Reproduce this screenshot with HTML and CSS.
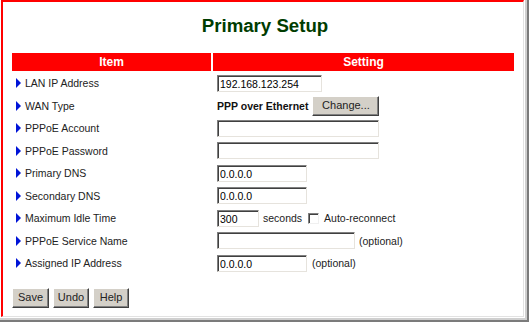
FILE: index.html
```html
<!DOCTYPE html>
<html>
	<head>
		<meta charset="UTF-8">
		<title>Primary Setup</title>
		<link rel="stylesheet" href="styles.css">
	</head>
	<body>
		<div class="screen">
			<div class="frame">
				<h1 class="title">Primary Setup</h1>
				<table class="setup">
					<tr>
						<th class="item">Item</th>
						<th>Setting</th>
					</tr>
					<tr>
						<td class="label"><span class="arrow"></span>LAN IP Address</td>
						<td class="value"><input class="w-lan" type="text" value="192.168.123.254"></td>
					</tr>
					<tr>
						<td class="label"><span class="arrow"></span>WAN Type</td>
						<td class="value"><div class="field"><b>PPP over Ethernet</b><button class="btn change">Change...</button></div></td>
					</tr>
					<tr>
						<td class="label"><span class="arrow"></span>PPPoE Account</td>
						<td class="value"><input class="w-long" type="text" value=""></td>
					</tr>
					<tr>
						<td class="label"><span class="arrow"></span>PPPoE Password</td>
						<td class="value"><input class="w-long" type="password" value=""></td>
					</tr>
					<tr>
						<td class="label"><span class="arrow"></span>Primary DNS</td>
						<td class="value"><input class="w-ip" type="text" value="0.0.0.0"></td>
					</tr>
					<tr>
						<td class="label"><span class="arrow"></span>Secondary DNS</td>
						<td class="value"><input class="w-ip" type="text" value="0.0.0.0"></td>
					</tr>
					<tr>
						<td class="label"><span class="arrow"></span>Maximum Idle Time</td>
						<td class="value">
							<div class="field">
								<input class="w-idle" type="text" value="300">
								<span>seconds</span>
								<input class="check" type="checkbox">
								<span>Auto-reconnect</span>
							</div>
						</td>
					</tr>
					<tr>
						<td class="label"><span class="arrow"></span>PPPoE Service Name</td>
						<td class="value"><div class="field"><input class="w-service" type="text" value=""><span>(optional)</span></div></td>
					</tr>
					<tr>
						<td class="label"><span class="arrow"></span>Assigned IP Address</td>
						<td class="value"><div class="field"><input class="w-ip" type="text" value="0.0.0.0"><span class="opt">(optional)</span></div></td>
					</tr>
				</table>
				<!--底部按钮-->
				<div class="actions">
					<button class="btn save">Save</button>
					<button class="btn undo">Undo</button>
					<button class="btn help">Help</button>
				</div>
			</div>
		</div>
	</body>
</html>
```
FILE: styles.css
```css
*{
	margin: 0px;
	padding: 0px;
}

body{
	background-color: white;
	font-family: "Liberation Sans", Arial, sans-serif;
	font-size: 10.5px;
	color: #222;
}

/*整个窗口 右边和下边是灰色的框*/
.screen{
	width: 529px;
	height: 322px;
	box-sizing: border-box;
	padding: 0 1px 1px 1px;
	border-right: 4px ridge #cfcfcf;
	border-bottom: 4px ridge #cfcfcf;
}

/*红色的左边和上边*/
.frame{
	height: 100%;
	box-sizing: border-box;
	border-top: solid 2px red;
	border-left: solid 2px red;
	border-right: solid 1px #e2e2e2;
	border-bottom: solid 1px #e2e2e2;
	padding: 13px 0 0 7px;
}

.title{
	width: 510px;
	text-align: center;
	font-size: 18.67px;
	line-height: 22px;
	color: #003c00;
	margin-bottom: 14px;
}

.setup{
	width: 506px;
	border-collapse: separate;
	border-spacing: 2px;
}

.setup th{
	height: 18px;
	background-color: red;
	color: white;
	font-size: 12px;
	line-height: 18px;
	text-align: center;
}

.setup .item{
	width: 199px;
}

.setup td{
	height: 20.5px;
	vertical-align: middle;
	white-space: nowrap;
}

.label{
	padding-left: 4px;
}

.value{
	padding-left: 4px;
}

/*蓝色的小三角*/
.arrow{
	display: inline-block;
	width: 0;
	height: 0;
	border-left: 5px solid #0014d8;
	border-top: 5px solid transparent;
	border-bottom: 5px solid transparent;
	margin-right: 4px;
	vertical-align: -1px;
}

.field{
	display: flex;
	align-items: center;
	gap: 4px;
}

.field b{
	font-size: 10.5px;
	color: #111;
}

/*输入框 凹进去的效果*/
input[type=text], input[type=password]{
	height: 17px;
	box-sizing: border-box;
	border-style: solid;
	border-width: 1px;
	border-color: #808080 #e6e3dd #e6e3dd #808080;
	box-shadow: inset 1px 1px 0 #404040;
	padding: 1px 0 0 2px;
	font-family: "Liberation Sans", Arial, sans-serif;
	font-size: 10.5px;
	color: #000;
	background-color: white;
	outline: none;
}

.w-lan{ width: 105px; }
.w-long{ width: 162px; }
.w-ip{ width: 90px; }
.w-idle{ width: 42px; }
.w-service{ width: 138px; }

.check{
	appearance: none;
	width: 11px;
	height: 11px;
	box-sizing: border-box;
	border-style: solid;
	border-width: 1px;
	border-color: #808080 #f0f0f0 #f0f0f0 #808080;
	box-shadow: inset 1px 1px 0 #404040;
	background-color: white;
	margin: 0 1px 0 2px;
}

.opt{
	margin-left: 1px;
}

/*按钮 凸出来的效果*/
.btn{
	height: 20px;
	box-sizing: border-box;
	background-color: #d4d0c8;
	border-style: solid;
	border-width: 1px;
	border-color: #ffffff #404040 #404040 #ffffff;
	box-shadow: inset -1px -1px 0 #808080;
	font-family: "Liberation Sans", Arial, sans-serif;
	font-size: 11px;
	color: #222;
	padding: 0 0 1px 0;
	text-align: center;
}

.change{
	width: 67px;
}

.save{ width: 37px; }
.undo{ width: 36px; }
.help{ width: 36px; }

.actions{
	display: flex;
	gap: 4px;
	margin: 12px 0 0 2px;
}
```
